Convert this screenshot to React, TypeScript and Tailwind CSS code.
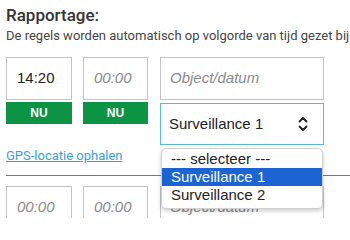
import React from "react";

const Chevrons = () => (
  <svg width="10" height="16" viewBox="0 0 10 16" fill="none" className="text-[#222]">
    <path d="M1.5 5.5 L5 2 L8.5 5.5" stroke="currentColor" strokeWidth="1.8" strokeLinecap="round" strokeLinejoin="round" />
    <path d="M1.5 10.5 L5 14 L8.5 10.5" stroke="currentColor" strokeWidth="1.8" strokeLinecap="round" strokeLinejoin="round" />
  </svg>
);

const TimeBox = ({ value }: { value?: string }) => (
  <div className="w-full h-[43px] border border-[#c4c4c4] bg-white flex items-center px-[10px] text-[15px] font-['Liberation_Sans',sans-serif]">
    {value ? (
      <span className="text-[#222]">{value}</span>
    ) : (
      <span className="text-[#8a8a8a] italic">00:00</span>
    )}
  </div>
);

const NuButton = () => (
  <button
    type="button"
    className="block mt-[2px] w-full h-[22px] bg-[#0a9444] text-white text-[12px] leading-[22px] font-bold font-['Liberation_Sans',sans-serif]"
  >
    NU
  </button>
);

const ObjectBox = () => (
  <div className="w-full h-[43px] border border-[#c4c4c4] bg-white flex items-center px-[9px] text-[15px] font-['Liberation_Sans',sans-serif]">
    <span className="text-[#8a8a8a] italic">Object/datum</span>
  </div>
);

const options = ["--- selecteer ---", "Surveillance 1", "Surveillance 2"];

export default function App() {
  return (
    <div className="w-[350px] h-[218px] overflow-hidden bg-white px-[6px] pt-[5px] font-['Roboto',sans-serif]">
      <h2 className="text-[17px] font-medium text-[#333] leading-[20px]">Rapportage:</h2>
      <p className="mt-[3px] text-[13px] text-[#444] leading-[15px] whitespace-nowrap">
        De regels worden automatisch op volgorde van tijd gezet bij
      </p>

      <div className="mt-[14px] flex items-start">
        <div className="w-[66px]">
          <TimeBox value="14:20" />
          <NuButton />
        </div>
        <div className="ml-[11px] w-[65px]">
          <TimeBox />
          <NuButton />
        </div>
        <div className="ml-[12px] w-[164px] relative">
          <ObjectBox />
          <div className="mt-[3px] h-[42px] border border-[#5bb8d9] bg-white flex items-center justify-between pl-[8px] pr-[15px] text-[15px] text-[#222] font-['Liberation_Sans',sans-serif]">
            <span>Surveillance 1</span>
            <Chevrons />
          </div>
          <div className="absolute left-px top-[91px] z-10 w-[162px] bg-white border border-[#d0d0d0] rounded-[5px] shadow-[0_2px_4px_rgba(0,0,0,0.2)] pt-px pb-[4px] text-[15px] font-['Liberation_Sans',sans-serif]">
            {options.map((o) => (
              <div
                key={o}
                className={
                  o === "Surveillance 1"
                    ? "h-[18px] leading-[18px] pl-[9px] bg-[#1c64d3] text-white"
                    : "h-[18px] leading-[18px] pl-[9px] text-[#222]"
                }
              >
                {o}
              </div>
            ))}
          </div>
        </div>
      </div>

      <a href="#" className="block mt-[2px] text-[13px] leading-[17px] text-[#3aa0dc] underline w-fit">
        GPS-locatie ophalen
      </a>

      <div className="mt-[11px] -mr-[6px] border-t border-[#9b59b6]" />

      <div className="mt-[10px] flex items-start">
        <div className="w-[66px]">
          <TimeBox />
        </div>
        <div className="ml-[11px] w-[65px]">
          <TimeBox />
        </div>
        <div className="ml-[12px] w-[164px]">
          <ObjectBox />
        </div>
      </div>
    </div>
  );
}
